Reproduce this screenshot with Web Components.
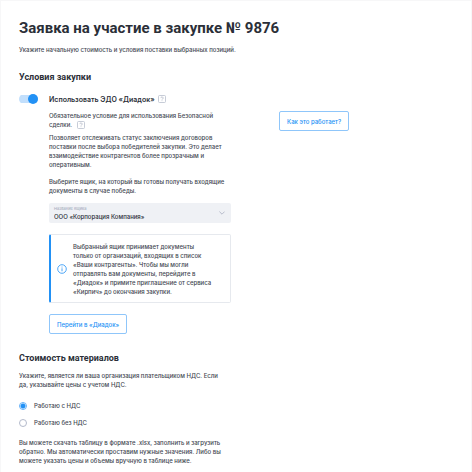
<!DOCTYPE html>
<html lang="ru">
<head>
<meta charset="utf-8">
<meta name="viewport" content="width=device-width, initial-scale=1">
<title>Заявка на участие в закупке № 9876</title>
<style>
:root{--ink:#2b2f38;--text:#444852;--blue:#2291f5;--line:#e6e9ee;--muted:#a9afbf;--head:Roboto,"Liberation Sans",sans-serif}
html{background:#f7f7f8}
body{margin:0;padding:1px 1px 0;font:500 6px/9px Inter,Roboto,sans-serif;color:var(--text)}
</style>
</head>
<body>
<bid-page></bid-page>

<template id="t-page">
<style>
:host{display:block;background:#fff;min-height:calc(100vh - 1px);box-sizing:border-box;padding:17px 18px 5px}
h1{margin:0 0 7px;font:700 15px/20px var(--head);color:var(--ink)}
p{margin:0}
.lead{margin-bottom:17px}
.grid{display:grid;grid-template-columns:212px auto;justify-content:start;column-gap:48px}
.main{padding-left:30px;display:flex;flex-direction:column;margin-top:7px}
.gap4{margin-top:4px}
.gap8{margin-top:8px}
box-select{margin-top:8px}
info-note{margin-top:11px}
.go{align-self:flex-start;margin-top:11px}
.how{align-self:start;margin-top:28px}
.cost{margin-top:18px}
.cost p{margin-top:7px}
vat-choice{margin:12px 0 11px}
</style>
<h1>Заявка на участие в закупке № 9876</h1>
<p class="lead">Укажите начальную стоимость и условия поставки выбранных позиций.</p>
<section-title>Условия закупки</section-title>
<div class="grid">
  <div>
    <toggle-row>Использовать ЭДО «Диадок»</toggle-row>
    <div class="main">
      <p>Обязательное условие для использования Безопасной<br>сделки. <help-hint></help-hint></p>
      <p class="gap4">Позволяет отслеживать статус заключения договоров<br>поставки после выбора победителей закупки. Это делает<br>взаимодействие контрагентов более прозрачным и<br>оперативным.</p>
      <p class="gap8">Выберите ящик, на который вы готовы получать входящие<br>документы в случае победы.</p>
      <box-select></box-select>
      <info-note>Выбранный ящик принимает документы<br>только от организаций, входящих в список<br>«Ваши контрагенты». Чтобы мы могли<br>отправлять вам документы, перейдите в<br>«Диадок» и примите приглашение от сервиса<br>«Кирпич» до окончания закупки.</info-note>
      <outline-button class="go">Перейти в «Диадок»</outline-button>
    </div>
  </div>
  <outline-button class="how">Как это работает?</outline-button>
</div>
<div class="cost">
  <section-title>Стоимость материалов</section-title>
  <p>Укажите, является ли ваша организация плательщиком НДС. Если<br>да, указывайте цены с учетом НДС.</p>
  <vat-choice></vat-choice>
  <p>Вы можете скачать таблицу в формате .xlsx, заполнить и загрузить<br>обратно. Мы автоматически проставим нужные значения. Либо вы<br>можете указать цены и объемы вручную в таблице ниже.</p>
</div>
</template>

<template id="t-title">
<style>
:host{display:block}
h2{margin:0;font:700 9px/12px var(--head);color:var(--ink)}
</style>
<h2><slot></slot></h2>
</template>

<template id="t-hint">
<style>
:host{display:inline-block;vertical-align:middle;height:8px;margin-left:3px}
button{display:block;width:8px;height:8px;padding:0;border:0;background:none;cursor:pointer}
svg{display:block}
</style>
<button type="button" aria-label="Подсказка"><svg width="8" height="8" viewBox="0 0 8 8" fill="none" stroke="#a9afbf"><rect x=".5" y=".5" width="7" height="7" rx="1" stroke="#b9bfcd" stroke-width=".8"/><path d="M2.9 3.1a1.1 1.1 0 1 1 1.6.9q-.5.3-.5.8M4 5.4v.7" stroke-width=".7"/></svg></button>
</template>

<template id="t-toggle">
<style>
:host{display:flex;align-items:center;margin-top:11px;height:10px}
input{appearance:none;flex:none;width:19px;height:10px;margin:0 11px 0 0;display:flex;align-items:center;justify-content:flex-end;border-radius:5px;background:linear-gradient(#c2dffc,#c2dffc) center/100% 8px no-repeat;cursor:pointer}
input::before{content:"";width:10px;height:10px;border-radius:50%;background:var(--blue)}
input:not(:checked){justify-content:flex-start}
label{font-size:7px;font-weight:600;color:var(--ink);white-space:nowrap}
</style>
<input type="checkbox" role="switch" id="edo" checked>
<label for="edo"><slot></slot></label>
<help-hint></help-hint>
</template>

<template id="t-select">
<style>
:host{display:grid;background:#eff1f5;border-radius:2px;height:20px;align-items:center}
label,select,svg{grid-area:1/1}
label{align-self:start;padding:3px 5px 0;font-size:4px;line-height:5px;color:var(--muted);pointer-events:none;z-index:1}
select{appearance:none;border:0;background:none;margin:0;width:100%;height:20px;padding:7px 20px 0 5px;font:inherit;color:var(--ink)}
svg{justify-self:end;margin-right:6px;pointer-events:none}
</style>
<label for="box">Название ящика</label>
<select id="box"><option>ООО «Корпорация Компания»</option></select>
<svg width="6" height="4" viewBox="0 0 6 4" fill="none" stroke="#a9afbf" stroke-width=".8"><path d="M.4.6 3 3.2 5.6.6"/></svg>
</template>

<template id="t-note">
<style>
:host{display:flex;align-items:center;gap:6px;box-sizing:border-box;min-height:69px;border:1px solid var(--line);border-left:2px solid var(--blue);border-radius:2px;padding:6px}
svg{flex:none}
div{white-space:nowrap}
</style>
<svg width="10" height="10" viewBox="0 0 10 10" fill="none" stroke="#2291f5" stroke-width=".8"><circle cx="5" cy="5" r="4.3"/><path d="M5 4.3v3M5 2.6v.9"/></svg>
<div><slot></slot></div>
</template>

<template id="t-button">
<style>
:host{display:block}
button{display:block;box-sizing:border-box;height:20px;padding:0 7px;border:1px solid #8fc6fa;border-radius:2px;background:#fff;font:inherit;font-weight:500;color:var(--blue);white-space:nowrap;cursor:pointer}
</style>
<button type="button"><slot></slot></button>
</template>

<template id="t-vat">
<style>
:host{display:block}
fieldset{border:0;margin:0;padding:0;display:grid;gap:8px}
label{display:flex;align-items:center;gap:7px;height:9px}
input{appearance:none;box-sizing:border-box;width:8px;height:8px;margin:0;border:1px solid #b3bacb;border-radius:50%;background:#fff}
input:checked{border-color:#64b1f8;background:radial-gradient(circle,var(--blue) 2px,#fff 3px)}
</style>
<fieldset aria-label="НДС">
<label><input type="radio" name="vat" checked>Работаю с НДС</label>
<label><input type="radio" name="vat">Работаю без НДС</label>
</fieldset>
</template>

<script>
const define = (tag, id) => customElements.define(tag, class extends HTMLElement {
  constructor() {
    super();
    this.attachShadow({mode: "open"}).append(document.getElementById(id).content.cloneNode(true));
  }
});
define("section-title", "t-title");
define("help-hint", "t-hint");
define("toggle-row", "t-toggle");
define("box-select", "t-select");
define("info-note", "t-note");
define("outline-button", "t-button");
define("vat-choice", "t-vat");
define("bid-page", "t-page");
</script>
</body>
</html>
